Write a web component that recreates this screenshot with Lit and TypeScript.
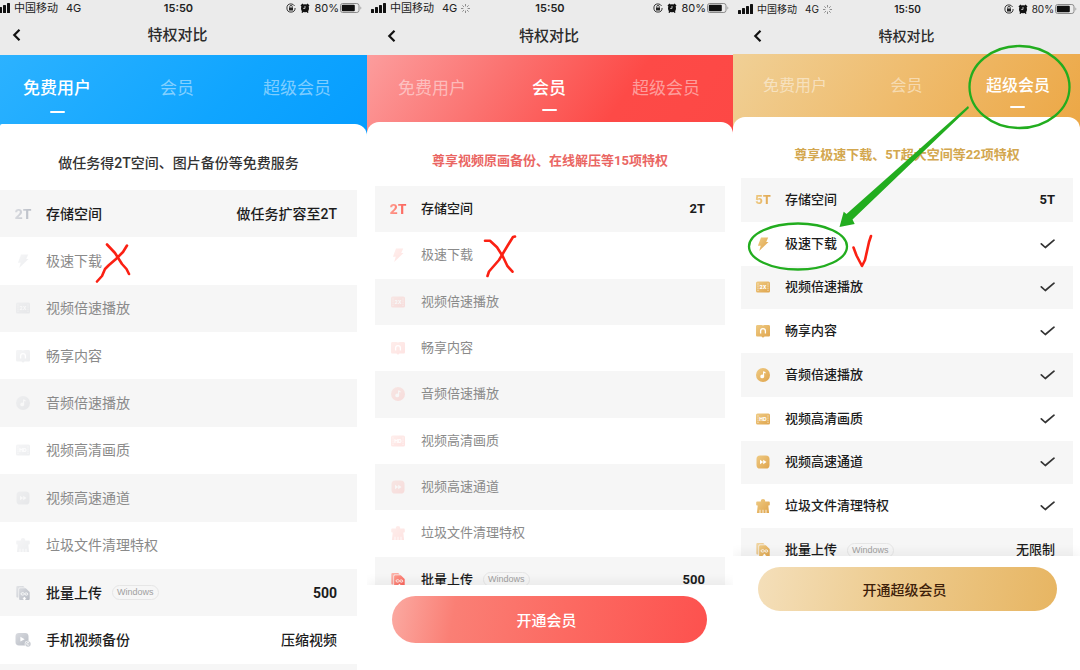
import { LitElement, html, svg, css, nothing, type SVGTemplateResult, type TemplateResult } from "lit";
import { customElement, property } from "lit/decorators.js";
import { classMap } from "lit/directives/class-map.js";

type IconName = "bolt" | "speed" | "book" | "music" | "hd" | "channel" | "clean" | "upload" | "phone";

interface Privilege {
  label: string;
  icon?: IconName;
  mark?: string;
  tag?: string;
  value?: string;
  checked?: boolean;
  off?: boolean;
}

interface Plan {
  tone: "free" | "vip" | "svip";
  active: number;
  loading: boolean;
  heading: string;
  rows: Privilege[];
  action?: string;
}

const TABS = ["免费用户", "会员", "超级会员"];

const SHARED: { label: string; icon: IconName }[] = [
  { label: "极速下载", icon: "bolt" },
  { label: "视频倍速播放", icon: "speed" },
  { label: "畅享内容", icon: "book" },
  { label: "音频倍速播放", icon: "music" },
  { label: "视频高清画质", icon: "hd" },
  { label: "视频高速通道", icon: "channel" },
  { label: "垃圾文件清理特权", icon: "clean" },
];

const PLANS: Plan[] = [
  {
    tone: "free",
    active: 0,
    loading: false,
    heading: "做任务得2T空间、图片备份等免费服务",
    rows: [
      { label: "存储空间", mark: "2T", value: "做任务扩容至2T" },
      ...SHARED.map((r) => ({ ...r, off: true })),
      { label: "批量上传", icon: "upload", tag: "Windows", value: "500" },
      { label: "手机视频备份", icon: "phone", value: "压缩视频" },
      { label: "" },
    ],
  },
  {
    tone: "vip",
    active: 1,
    loading: true,
    heading: "尊享视频原画备份、在线解压等15项特权",
    rows: [
      { label: "存储空间", mark: "2T", value: "2T" },
      ...SHARED.map((r) => ({ ...r, off: true })),
      { label: "批量上传", icon: "upload", tag: "Windows", value: "500" },
    ],
    action: "开通会员",
  },
  {
    tone: "svip",
    active: 2,
    loading: true,
    heading: "尊享极速下载、5T超大空间等22项特权",
    rows: [
      { label: "存储空间", mark: "5T", value: "5T" },
      ...SHARED.map((r) => ({ ...r, checked: true })),
      { label: "批量上传", icon: "upload", tag: "Windows", value: "无限制" },
    ],
    action: "开通超级会员",
  },
];

const filmBody = svg`
  <rect x="1" y="2.5" width="14" height="11" rx="1.6" fill="url(#tone)"/>
  <path d="M3 4.5v7.4M13 4.5v7.4" stroke="#fff" stroke-width="1" stroke-dasharray="1 1.1" opacity=".8"/>`;

const ICONS: Record<IconName, SVGTemplateResult> = {
  bolt: svg`<path d="M6 1.500h7.200L11.200 6h2.300L4.200 15l1.500-5.200H2.900z" fill="url(#tone)"/>`,
  speed: svg`${filmBody}<text x="8" y="10" class="glyph">2X</text>`,
  book: svg`
    <path d="M2.400 2h4.100c.7 0 1.200.2 1.500.6.3-.4.8-.6 1.500-.6h4.100c.8 0 1.400.6 1.400 1.400v8.800c0 .8-.6 1.400-1.400 1.400H9.600L8 14.800l-1.600-1.200h-4c-.8 0-1.400-.6-1.400-1.400V3.400C1 2.600 1.600 2 2.400 2z" fill="url(#tone)"/>
    <path d="M5.600 10.600V8a2.400 2.400 0 0 1 4.800 0v2.600" fill="none" stroke="#fff" stroke-width="1.300"/>`,
  music: svg`
    <circle cx="8" cy="8" r="7" fill="url(#tone)"/>
    <circle cx="7.200" cy="9.400" r="1.900" fill="#fff"/>
    <path d="M8.600 9.400V4.400c.3 1 1 1.400 2 1.500" fill="none" stroke="#fff" stroke-width="1.100"/>`,
  hd: svg`${filmBody}<text x="8" y="10" class="glyph">HD</text>`,
  channel: svg`
    <rect x="1.500" y="1.500" width="13" height="13" rx="3.600" fill="url(#tone)"/>
    <path d="M5 5.800 8.200 8 5 10.200zM8.200 5.800 11.500 8l-3.300 2.200z" fill="#fff"/>`,
  clean: svg`
    <path d="M5.800 3.400C5.800 1.800 6.700 1 8 1s2.200.8 2.200 2.400h3.400c.8 0 1.200.4 1.200 1.100v2c0 .7-.5 1.100-1.200 1.100h-.3l.8 7.400H1.900l.8-7.400h-.3c-.7 0-1.200-.4-1.200-1.100v-2c0-.7.4-1.100 1.200-1.100z" fill="url(#tone)"/>
    <path d="M5 11.800V15M8 11.800V15M11 11.800V15" stroke="#fff" stroke-width=".9" opacity=".9"/>`,
  upload: svg`
    <path d="M2.600 1h5.600l1.600 1.600H5c-1 0-1.600.6-1.600 1.600v8.400h-.8c-.8 0-1.300-.5-1.300-1.300v-9C1.300 1.500 1.800 1 2.600 1z" fill="url(#tone)" opacity=".7"/>
    <path d="M5.400 3.300h5.400l3.900 3.700v6.800c0 .8-.5 1.300-1.300 1.300h-8c-.8 0-1.300-.5-1.300-1.300V4.600c0-.8.5-1.300 1.300-1.300z" fill="url(#tone)"/>
    <path d="M9.400 8.700C8.600 7.400 6 7.300 6 8.900s2.600 1.500 3.400.2c.8-1.500 3.400-1.600 3.400 0s-2.600 1.300-3.400-.4z" fill="none" stroke="#fff" stroke-width=".9"/>
    <path d="m9.400 11.800 2 1.900h-1.100V15H8.500v-1.300H7.400z" fill="#fff"/>`,
  phone: svg`
    <rect x=".5" y="1" width="13" height="12.500" rx="3.400" fill="url(#tone)"/>
    <path d="m5.400 4.800 4.200 2.400-4.200 2.400z" fill="#fff"/>
    <circle cx="13" cy="12" r="3.300" fill="#fff"/>
    <circle cx="13" cy="12" r="2.700" fill="#c9ccd2"/>
    <path d="M14 10.900a1.300 1.300 0 1 0 .2 1.500" fill="none" stroke="#fff" stroke-width=".8"/>`,
};

@customElement("plan-screen")
export class PlanScreen extends LitElement {
  @property({ attribute: false }) plan!: Plan;

  static styles = css`
    :host {
      position: relative;
      display: flex;
      flex-direction: column;
      min-width: 0;
      height: 100%;
      background: #fff;
      color: #1c1c1c;
    }
    .screen {
      display: flex;
      flex-direction: column;
      flex: 1;
      min-height: 0;
      overflow: hidden;
    }
    .free {
      --status-h: 15px; --status-size: 11px; --status-pad: 0 5px 0 0; --bleed: -5px;
      --nav-h: 40px; --nav-size: 15px; --nav-pad: 0 24px 0 12px;
      --hero-h: 81px; --hero-top: 21px; --hero-gap: 11px; --tab-size: 17px;
      --hero-bg: linear-gradient(135deg, #2cb2ff 0%, #10a5ff 60%, #059dff 100%);
      --card-radius: 2px 12px 0 0; --card-pad: 12px 10px 0 0; --head-h: 54px; --head-size: 14px; --head-color: #333;
      --table-h: 521px; --icon-w: 46px; --text: 14px; --faded: .25; --mark: 13px;
      --c1: #d9dbe0; --c2: #b9bdc5;
    }
    .vip {
      --status-h: 16px; --status-size: 11px; --status-pad: 0 4px; --bleed: 0px;
      --nav-h: 39px; --nav-size: 15px; --nav-pad: 0 22px 0 20px;
      --hero-h: 79px; --hero-top: 21px; --hero-gap: 9px; --tab-size: 17px;
      --hero-bg: linear-gradient(125deg, #fc9d9d 0%, #fb7270 35%, #fd4a47 68%, #fd4845 100%);
      --card-radius: 12px 12px 0 0; --card-pad: 14px 8px 0; --head-h: 50px; --head-size: 13px; --head-color: #ea6663;
      --table-h: 417px; --icon-w: 46px; --text: 13px; --faded: .17; --mark: 13px;
      --c1: #ff9d8e; --c2: #fb5f58;
      --foot-pad: 11px 26px 27px 25px; --btn-h: 47px; --btn-size: 15px; --btn-color: #fff;
      --btn-bg: linear-gradient(100deg, #fbaaa2 0%, #fa7f75 20%, #fc6a62 55%, #fd514e 100%);
    }
    .svip {
      --status-h: 18px; --status-size: 10px; --status-pad: 0 3px 0 5px; --bleed: 0px;
      --nav-h: 36px; --nav-size: 14px; --nav-pad: 0 20px;
      --hero-h: 75px; --hero-top: 20px; --hero-gap: 8px; --tab-size: 16px;
      --hero-bg: linear-gradient(125deg, #f0d096 0%, #efbb6c 50%, #eca745 100%);
      --card-radius: 12px 12px 0 0; --card-pad: 15px 7px 0 8px; --head-h: 46px; --head-size: 13px; --head-color: #d3a74f;
      --table-h: 394px; --icon-w: 44px; --text: 13px; --faded: 1; --mark: 12px;
      --c1: #efcb84; --c2: #dfa44c;
      --foot-pad: 11px 23px 59px 25px; --btn-h: 44px; --btn-size: 14px; --btn-color: #3d2009;
      --btn-bg: linear-gradient(100deg, #f4dfba 0%, #edcb8e 45%, #e7b562 100%);
    }
    .status {
      display: grid;
      grid-template-columns: 1fr auto 1fr;
      align-items: center;
      height: var(--status-h);
      flex: none;
      margin-left: var(--bleed);
      padding: var(--status-pad);
      background: #ebebeb;
      font-family: Inter, "Noto Sans CJK SC", sans-serif;
      font-size: var(--status-size);
      line-height: 14px;
      color: #222;
      white-space: nowrap;
    }
    .carrier, .power { display: flex; align-items: center; gap: 4px; }
    .net { margin-left: 4px; }
    .power { justify-content: flex-end; }
    .battery { display: flex; align-items: center; gap: 1px; }
    .time { font-weight: 600; }
    .nav {
      display: grid;
      grid-template-columns: 1fr auto 1fr;
      align-items: center;
      flex: none;
      height: var(--nav-h);
      box-sizing: border-box;
      padding: var(--nav-pad);
      background: #ebebeb;
    }
    .title { margin: 0; font-size: var(--nav-size); line-height: 24px; font-weight: 500; color: #2c2c2c; }
    button { font: inherit; border: 0; margin: 0; padding: 0; background: none; cursor: pointer; }
    .back { display: flex; justify-self: start; }
    .hero {
      display: flex;
      justify-content: space-between;
      align-items: flex-start;
      flex: none;
      height: var(--hero-h);
      box-sizing: border-box;
      padding: var(--hero-top) 0 0;
      background: var(--hero-bg);
    }
    .free .hero { padding-left: 23px; padding-right: 36px; }
    .vip .hero { padding-left: 31px; padding-right: 33px; }
    .svip .hero { padding-left: 30px; padding-right: 30px; }
    .tab {
      display: flex;
      flex-direction: column;
      align-items: center;
      gap: var(--hero-gap);
      font-size: var(--tab-size);
      line-height: 24px;
      color: rgba(255, 255, 255, .48);
    }
    .tab::after { content: ""; width: 15px; height: 2px; border-radius: 1px; }
    .tab.current { color: #fff; font-weight: 500; }
    .tab.current::after { background: #fff; }
    .card {
      flex: 1;
      min-height: 0;
      overflow: hidden;
      margin-top: -12px;
      padding: var(--card-pad);
      border-radius: var(--card-radius);
      background: #fff;
    }
    .head {
      margin: 0;
      font-size: var(--head-size);
      line-height: var(--head-h);
      font-weight: 500;
      text-align: center;
      color: var(--head-color);
      white-space: nowrap;
    }
    .vip .head, .svip .head { font-weight: 700; }
    .list { width: 100%; height: var(--table-h); border-collapse: collapse; font-size: var(--text); line-height: 20px; }
    .row { height: 40px; }
    .row:nth-child(odd) { background: #f6f6f6; }
    th, td { padding: 0; vertical-align: middle; font-weight: 500; }
    .lead { width: var(--icon-w); text-align: center; }
    .icon { display: block; margin: 0 auto; }
    .off .icon { opacity: var(--faded); }
    .off .name { color: #8a8a8a; font-weight: 400; }
    .glyph { font: 800 5px Inter, sans-serif; fill: #fff; text-anchor: middle; }
    .mark {
      font-family: Inter, sans-serif;
      font-size: var(--mark);
      font-weight: 800;
      background: linear-gradient(90deg, var(--c1), var(--c2));
      background-clip: text;
      -webkit-background-clip: text;
      color: transparent;
    }
    .name { text-align: left; }
    .label { display: flex; align-items: center; gap: 10px; }
    .tag {
      padding: 0 4px;
      border: 1px solid #e6e6e6;
      border-radius: 8px;
      font: 400 9px/13px "Liberation Sans", sans-serif;
      color: #a0a0a0;
    }
    .value { padding-right: 20px; text-align: right; }
    .value.latin { font-weight: 700; }
    .svip .value { padding-right: 18px; }
    .tick { display: block; margin-left: auto; }
    .foot {
      position: relative;
      flex: none;
      padding: var(--foot-pad);
      background: #fff;
      box-shadow: 0 -4px 10px rgba(0, 0, 0, .05);
    }
    .buy {
      display: block;
      width: 100%;
      height: var(--btn-h);
      padding-right: 6px;
      border-radius: 24px;
      background: var(--btn-bg);
      color: var(--btn-color);
      font-size: var(--btn-size);
      font-weight: 500;
    }
    .ink { position: absolute; top: 0; left: 0; overflow: visible; pointer-events: none; }
    .defs { position: absolute; }
  `;

  private statusBar(): TemplateResult {
    return html`
      <div class="status">
        <span class="carrier">
          <svg width="15" height="10" viewBox="0 0 15 10" fill="#111" aria-hidden="true">
            <rect y="6" width="3" height="4" rx=".6"/><rect x="4" y="4" width="3" height="6" rx=".6"/>
            <rect x="8" y="2" width="3" height="8" rx=".6"/><rect x="12" width="3" height="10" rx=".6"/>
          </svg>
          <span>中国移动</span><span class="net">4G</span>
          ${this.plan.loading
            ? html`<svg width="9" height="9" viewBox="0 0 10 10" aria-hidden="true">
                <path d="M5 0v2.600M5 7.400V10M0 5h2.600M7.400 5H10M1.500 1.500l1.800 1.800M6.700 6.700l1.800 1.800M8.500 1.500 6.700 3.300M3.300 6.700 1.500 8.500" stroke="#777" stroke-width=".9"/>
              </svg>`
            : nothing}
        </span>
        <span class="time">15:50</span>
        <span class="power">
          <svg width="10" height="10" viewBox="0 0 10 10" aria-hidden="true">
            <circle cx="5" cy="5" r="4.100" fill="none" stroke="#222" stroke-width=".9" stroke-dasharray="23 3"/>
            <rect x="3" y="4.500" width="4" height="3" fill="#222"/>
            <path d="M3.700 4.600V3.700a1.300 1.300 0 0 1 2.600 0v.9" fill="none" stroke="#222" stroke-width=".8"/>
          </svg>
          <svg width="10" height="10" viewBox="0 0 10 10" aria-hidden="true">
            <path d="M1 3 3 1M9 3 7 1M2 9.600l1-1.500M8 9.600 7 8.100" stroke="#111" stroke-width="1.500"/>
            <circle cx="5" cy="5.200" r="4" fill="#111"/>
            <path d="M5 3v2.400H3.200" fill="none" stroke="#ebebeb" stroke-width=".8"/>
          </svg>
          <span class="battery"><span>80%</span>
            <svg width="22" height="10" viewBox="0 0 22 10" aria-hidden="true">
              <rect x=".5" y=".5" width="18.500" height="9" rx="2.200" fill="none" stroke="#8a8a8a"/>
              <rect x="1.800" y="1.800" width="13" height="6.400" rx="1" fill="#111"/>
              <path d="M20.500 3.500c1 .4 1 2.600 0 3z" fill="#8a8a8a"/>
            </svg>
          </span>
        </span>
      </div>`;
  }

  private row(r: Privilege): TemplateResult {
    const latin = /^[0-9A-Z]+$/.test(r.value ?? "");
    return html`
      <tr class=${classMap({ row: true, off: !!r.off })}>
        <td class="lead">
          ${r.mark ? html`<span class="mark">${r.mark}</span>` : nothing}
          ${r.icon ? html`<svg class="icon" width="16" height="16" viewBox="0 0 16 16" aria-hidden="true">${ICONS[r.icon]}</svg>` : nothing}
        </td>
        <th class="name" scope="row">
          <span class="label">${r.label}${r.tag ? html`<span class="tag">${r.tag}</span>` : nothing}</span>
        </th>
        <td class=${classMap({ value: true, latin })}>
          ${r.checked
            ? html`<svg class="tick" width="15" height="10" viewBox="0 0 15 10" role="img" aria-label="支持">
                <path d="M1.300 4.800 5.300 8.500 14 1.200" fill="none" stroke="#333" stroke-width="1.700" stroke-linecap="round" stroke-linejoin="round"/>
              </svg>`
            : r.value ?? nothing}
        </td>
      </tr>`;
  }

  private ink(): SVGTemplateResult {
    switch (this.plan.tone) {
      case "free":
        return svg`<g fill="none" stroke="#fb2013" stroke-width="2.600" stroke-linecap="round" stroke-linejoin="round">
          <path d="M107 244.500 115 253l7 11 4.500 5 2.500 5"/>
          <path d="M127 245.500 123 252l-7 7-7 6-4 4-3 7-5 5.500"/>
        </g>`;
      case "vip":
        return svg`<g fill="none" stroke="#fb2013" stroke-width="2.600" stroke-linecap="round" stroke-linejoin="round">
          <path d="M118 240.700h5l7 6.500 6 9.500 4.500 9.500 5 5.500"/>
          <path d="M148 236.500l-2 .5-5 8-9 15-10 11.500-1.500 4.500"/>
        </g>`;
      default:
        return svg`
          <g fill="none" stroke="#22ad1f" stroke-width="2.300">
            <ellipse cx="286.500" cy="87" rx="50" ry="41"/>
            <ellipse cx="65" cy="246.500" rx="49" ry="23"/>
          </g>
          <path d="M106.500 227 110.700 211.700 113.500 214 235 106 236 108 119.500 219.500 121.700 224z" fill="#22ad1f"/>
          <path d="M120.500 247.500l3 8 5.500 10.500 3-6 4-18 2-6" fill="none" stroke="#fb2013" stroke-width="2.600" stroke-linecap="round" stroke-linejoin="round"/>`;
    }
  }

  render() {
    const p = this.plan;
    return html`
      <div class="screen ${p.tone}">
        <svg class="defs" width="0" height="0" aria-hidden="true">
          <linearGradient id="tone" x1="0" y1="0" x2="1" y2="1">
            <stop offset="0" style="stop-color: var(--c1)"/>
            <stop offset="1" style="stop-color: var(--c2)"/>
          </linearGradient>
        </svg>
        ${this.statusBar()}
        <header class="nav">
          <button class="back" aria-label="返回">
            <svg width="10" height="14" viewBox="0 0 10 14" aria-hidden="true">
              <path d="M7.500 1.800 2.300 7l5.200 5.200" fill="none" stroke="#111" stroke-width="2.200"/>
            </svg>
          </button>
          <h1 class="title">特权对比</h1>
        </header>
        <nav class="hero">
          ${TABS.map((t, i) => html`<button class=${classMap({ tab: true, current: i === p.active })}>${t}</button>`)}
        </nav>
        <section class="card">
          <h2 class="head">${p.heading}</h2>
          <table class="list"><tbody>${p.rows.map((r) => this.row(r))}</tbody></table>
        </section>
        ${p.action ? html`<footer class="foot"><button class="buy">${p.action}</button></footer>` : nothing}
      </div>
      <svg class="ink" width="1" height="1" aria-hidden="true">${this.ink()}</svg>`;
  }
}

@customElement("app-root")
export class AppRoot extends LitElement {
  static styles = css`
    :host {
      display: grid;
      grid-template-columns: 367fr 366fr 347fr;
      grid-template-rows: 100%;
      height: 100vh;
      overflow: hidden;
      font-family: Roboto, "Noto Sans CJK SC", sans-serif;
    }
  `;

  render() {
    return PLANS.map((plan) => html`<plan-screen .plan=${plan}></plan-screen>`);
  }
}
